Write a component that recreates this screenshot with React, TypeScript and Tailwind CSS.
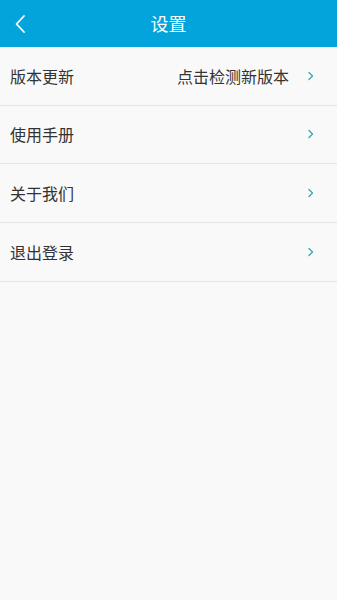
const rows = [
  { label: "版本更新", value: "点击检测新版本" },
  { label: "使用手册" },
  { label: "关于我们" },
  { label: "退出登录" },
];

function Chevron() {
  return (
    <svg width="8" height="10" viewBox="0 0 8 10" fill="none" className="shrink-0">
      <path d="M2 1.5L5.5 5L2 8.5" stroke="#3fa6b9" strokeWidth="1.4" strokeLinecap="round" strokeLinejoin="round" />
    </svg>
  );
}

export default function App() {
  return (
    <div
      className="min-h-[600px] w-full bg-[#f9f9f9]"
      style={{ fontFamily: '"Noto Sans CJK SC", "Noto Sans", sans-serif' }}
    >
      {/* Top bar */}
      <div className="relative flex h-[47px] items-center justify-center bg-[#03a3db]">
        <button className="absolute left-[10px] top-0 flex h-full w-[20px] items-center justify-center">
          <svg width="14" height="20" viewBox="0 0 14 20" fill="none">
            <path d="M11 2L3.5 10L11 18" stroke="white" strokeWidth="1.8" strokeLinecap="round" strokeLinejoin="round" />
          </svg>
        </button>
        <h1 className="text-[18px] font-normal text-white">设置</h1>
      </div>

      {/* Settings list */}
      <div>
        {rows.map((row) => (
          <div
            key={row.label}
            className="flex h-[58.67px] items-center border-b border-[#e4e4e4] pl-[10px] pr-[22px]"
          >
            <span className="flex-1 text-[16px] text-[#333333]">{row.label}</span>
            {row.value && (
              <span className="mr-[18px] text-[16px] text-[#333333]">{row.value}</span>
            )}
            <Chevron />
          </div>
        ))}
      </div>
    </div>
  );
}
